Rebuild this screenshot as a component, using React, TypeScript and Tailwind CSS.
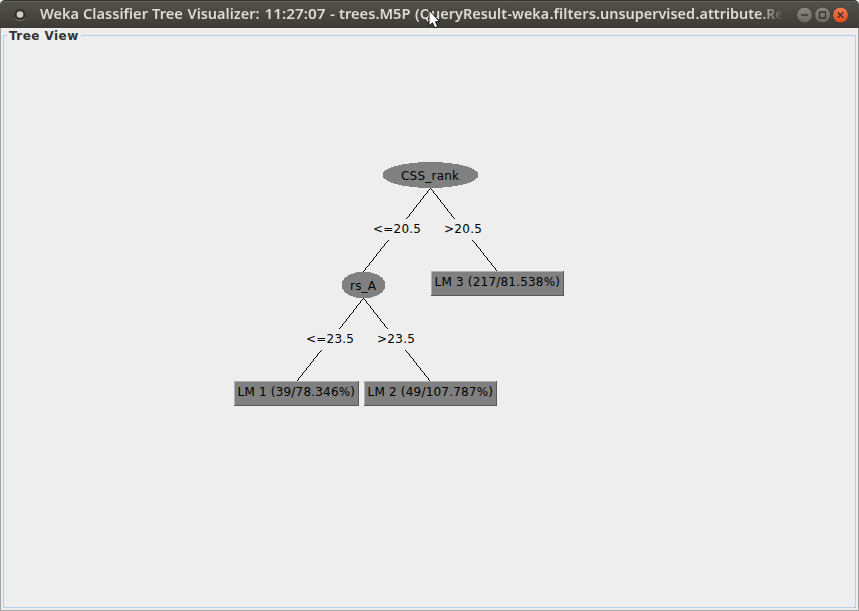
type Point = [number, number];

const edges: [Point, Point][] = [
  [[430.5, 188], [406.5, 219]],
  [[430.5, 188], [454.5, 219]],
  [[388.5, 240], [363.5, 271.5]],
  [[472.5, 240], [497, 271]],
  [[363.5, 298], [339.5, 329]],
  [[363.5, 298], [387.5, 329]],
  [[321.5, 350], [297, 381]],
  [[405.5, 350], [430, 381]],
];

const leaves = [
  { x: 234, y: 381, w: 125, label: 'LM 1 (39/78.346%)', tw: 117.5 },
  { x: 364, y: 381, w: 133, label: 'LM 2 (49/107.787%)', tw: 125.5 },
  { x: 431, y: 271, w: 133, label: 'LM 3 (217/81.538%)', tw: 125.5 },
];

const labels = [
  { x: 401, y: 180, text: 'CSS_rank', tw: 58 },
  { x: 350, y: 290, text: 'rs_A', tw: 26 },
  { x: 373, y: 233, text: '<=20.5', tw: 48 },
  { x: 444, y: 233, text: '>20.5', tw: 38 },
  { x: 306, y: 343, text: '<=23.5', tw: 48 },
  { x: 377, y: 343, text: '>23.5', tw: 38 },
];

const titleRuns = [
  { x: 40, w: 39, text: 'Weka' },
  { x: 83, w: 65, text: 'Classifier' },
  { x: 152, w: 31, text: 'Tree' },
  { x: 187.5, w: 72, text: 'Visualizer:' },
  { x: 264.5, w: 61, text: '11:27:07' },
  { x: 330, w: 5, text: '-' },
  { x: 339, w: 71.5, text: 'trees.M5P' },
  { x: 415, w: 92, text: '(QueryResult' },
  { x: 507.5, w: 41.5, text: '-weka' },
  { x: 549.5, w: 46.5, text: '.filters' },
  { x: 596, w: 103, text: '.unsupervised' },
  { x: 695.5, w: 67, text: '.attribute' },
  { x: 762.5, w: 21, text: '.Re' },
].map((r) => (r.text === '.unsupervised' ? { ...r, w: 99 } : r));

function Tree() {
  return (
    <svg className="block h-[583px] w-[859px] font-['DejaVu_Sans',sans-serif] text-[12px]" viewBox="0 28 859 583">
      <g shapeRendering="crispEdges">
        <ellipse cx="430.5" cy="175" rx="48" ry="13" fill="#808080" />
        <ellipse cx="363.5" cy="285" rx="22" ry="13.3" fill="#808080" />
        {edges.map(([a, b], i) => (
          <path key={i} d={`M${a[0] - 0.5} ${a[1]}h1L${b[0] + 0.5} ${b[1]}h-1z`} fill="#000" />
        ))}
        {leaves.map((n) => (
          <g key={n.label}>
            <rect x={n.x} y={n.y} width={n.w} height="25" fill="#808080" />
            <path d={`M${n.x + 0.5} ${n.y + 25}V${n.y + 0.5}H${n.x + n.w}`} fill="none" stroke="#b2b2b2" />
            <path d={`M${n.x} ${n.y + 24.5}H${n.x + n.w - 0.5}V${n.y}`} fill="none" stroke="#595959" />
          </g>
        ))}
      </g>
      {leaves.map((n) => (
        <text key={n.label} x={n.x + 3.5} y={n.y + 15} textLength={n.tw}>{n.label}</text>
      ))}
      {labels.map((l) => (
        <text key={l.text} x={l.x} y={l.y} textLength={l.tw}>{l.text}</text>
      ))}
    </svg>
  );
}

function TitleBar() {
  return (
    <header className="relative flex h-7 items-center overflow-hidden rounded-t-[5px] border-t border-[#35342f] bg-linear-to-b from-[#53524c] to-[#3c3b37] shadow-[inset_0_1px_0_#65645e]">
      <svg className="ml-3 h-4 w-4 shrink-0" viewBox="0 0 16 16">
        <circle cx="8" cy="8" r="6" fill="#34332f" />
        <path d="M3 11a6 6 0 0 0 10 0" fill="none" stroke="#77766f" />
        <circle cx="8" cy="7.5" r="3.3" fill="#d0cdc7" />
      </svg>
      <div className="ml-3 h-7 w-[746px] shrink-0 mask-[linear-gradient(to_right,#000_718px,transparent_744px)]">
        <svg className="block h-7 w-[746px] font-['Noto_Sans','Open_Sans',sans-serif] text-[14.5px] font-semibold" viewBox="40 0 746 28">
          {titleRuns.map((r) => (
            <text key={r.text} x={r.x} y="18" fill="#dfdbd2" textLength={r.w} lengthAdjust="spacingAndGlyphs">{r.text}</text>
          ))}
        </svg>
      </div>
      <svg className="ml-2 h-5 w-[56px] shrink-0" viewBox="794 4 56 20">
        <defs>
          <linearGradient id="gray" x1="0" y1="0" x2="0" y2="1">
            <stop stopColor="#8b8a82" /><stop offset="1" stopColor="#696861" />
          </linearGradient>
          <linearGradient id="orange" x1="0" y1="0" x2="0" y2="1">
            <stop stopColor="#f47d55" /><stop offset="1" stopColor="#e64b1c" />
          </linearGradient>
        </defs>
        <circle cx="804.5" cy="14" r="7.8" fill="url(#gray)" stroke="#35342f" strokeWidth=".6" />
        <circle cx="822.5" cy="14" r="7.8" fill="url(#gray)" stroke="#35342f" strokeWidth=".6" />
        <circle cx="840.5" cy="14" r="7.8" fill="url(#orange)" stroke="#35342f" strokeWidth=".6" />
        <path d="M801 14h7M819.5 11h6v6h-6zM837.7 11.2l5.6 5.6m0-5.6l-5.6 5.6" fill="none" stroke="#34332f" strokeWidth="1.3" />
      </svg>
    </header>
  );
}

export default function App() {
  return (
    <main className="relative h-[611px] w-[859px] overflow-hidden bg-white">
      <TitleBar />
      <section className="relative h-[583px] border-x border-b border-[#a3a3a3] bg-[#eee]">
        <div className="-ml-px"><Tree /></div>
      </section>
      <div className="absolute top-[35px] left-[3px] h-[573px] w-[853px] border border-[#b8cfe5]" />
      <h1 className="absolute top-[29px] left-[7px] bg-[#eee] px-[2px] font-['DejaVu_Sans',sans-serif] text-[12px] leading-[15px] font-bold tracking-[0.45px] text-[#333]">Tree View</h1>
      <svg className="absolute top-[9px] left-[428px] h-5 w-3" viewBox="0 0 12 20">
        <path d="M1 1v16l3.5-3.2 2.2 5 3-1.3-2.2-4.8h4z" fill="#fff" stroke="#000" strokeWidth=".9" />
      </svg>
    </main>
  );
}
